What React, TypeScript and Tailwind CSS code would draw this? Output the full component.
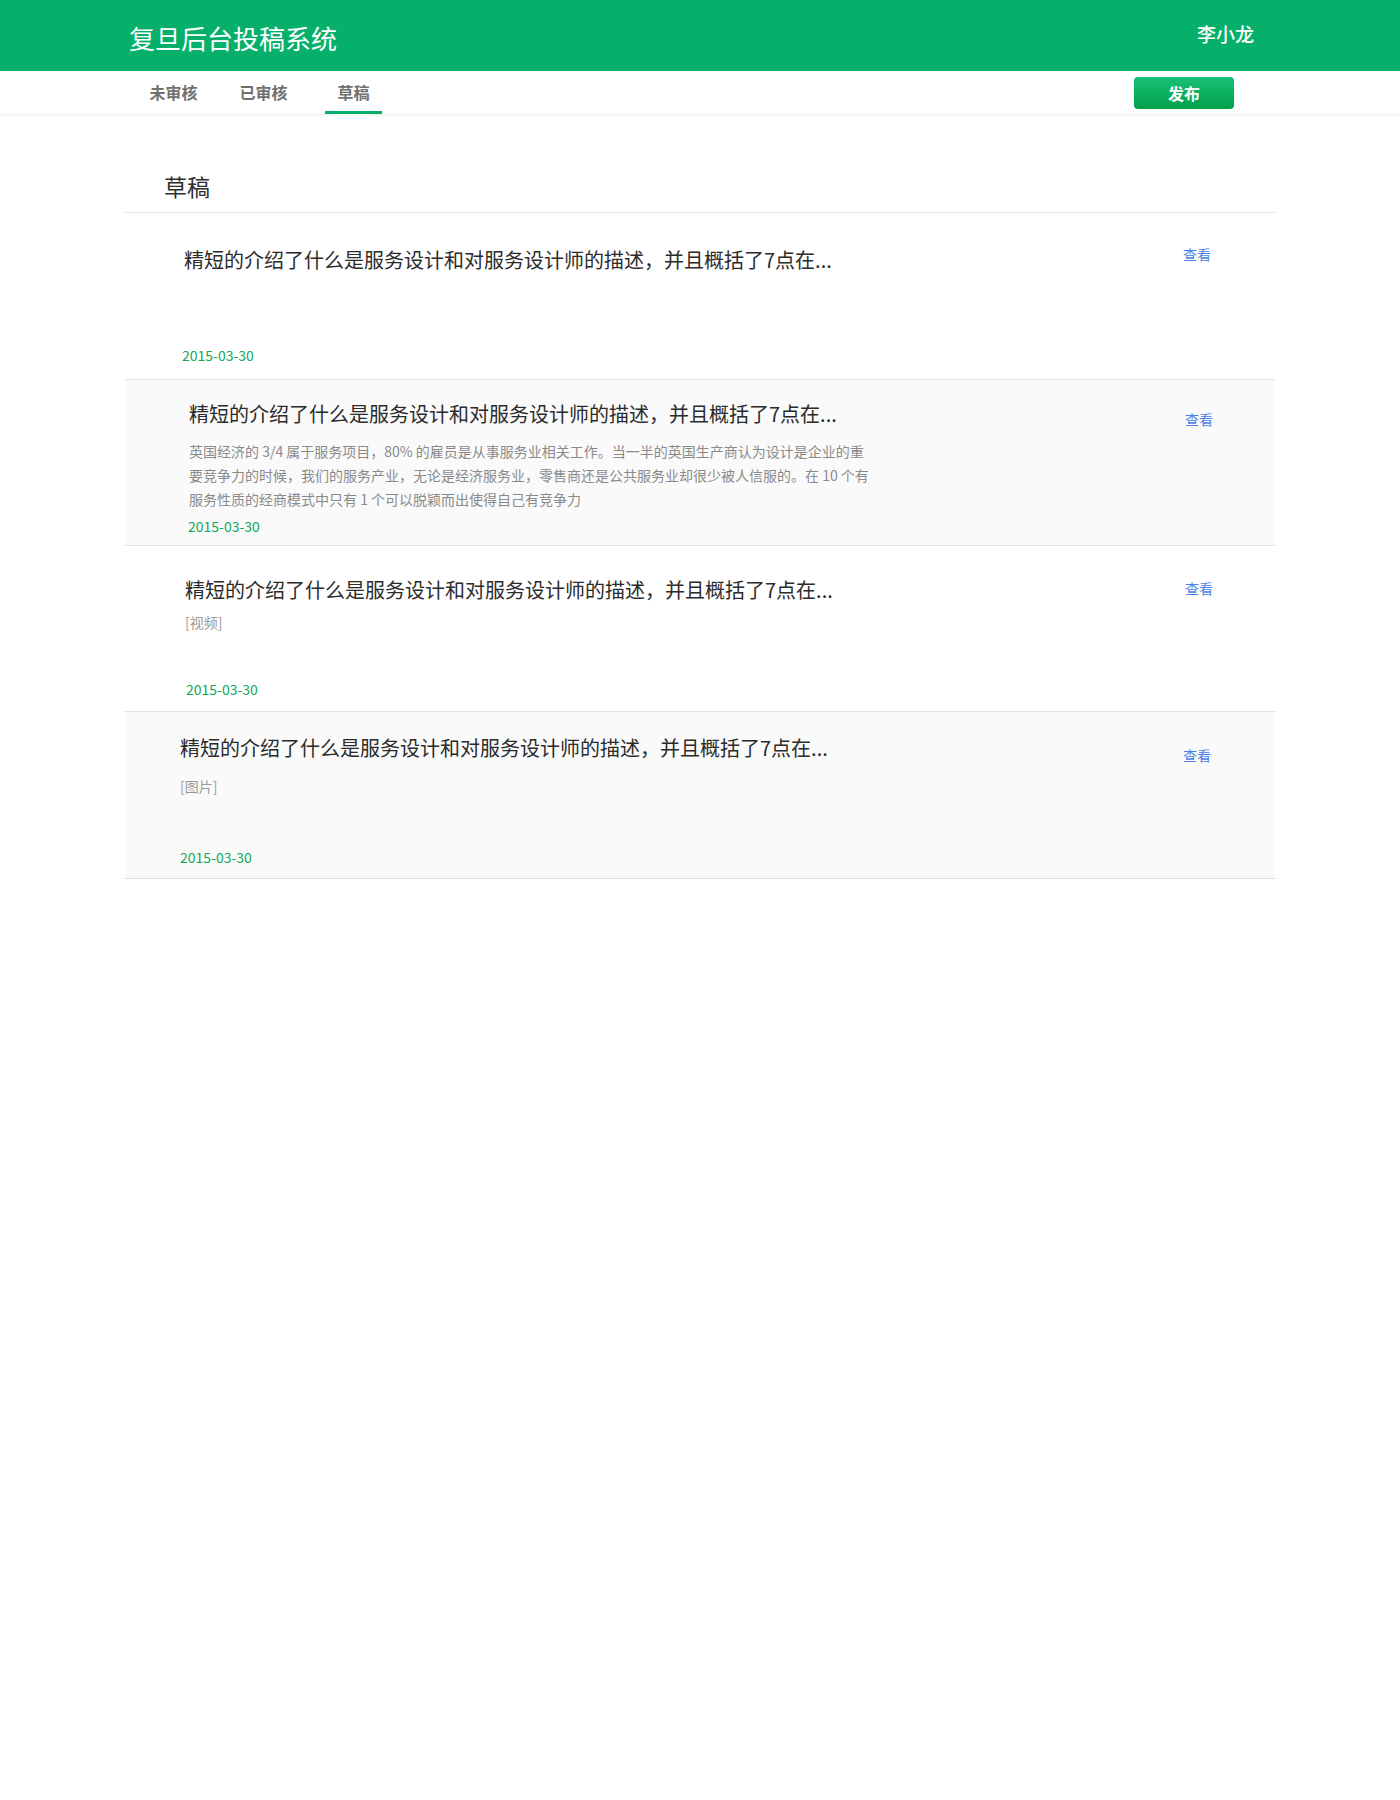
const font = { fontFamily: '"Noto Sans CJK SC", "Noto Sans", sans-serif' }

type Draft = {
    desc?: string[]
    tag?: string
    shaded?: boolean
    rowClass: string
    titleClass: string
    linkClass: string
    dateClass: string
    tagClass?: string
}

const TITLE = '精短的介绍了什么是服务设计和对服务设计师的描述，并且概括了7点在...'

const drafts: Draft[] = [
    {
        rowClass: 'h-[167px]',
        titleClass: 'pt-[33px] pl-[59px]',
        linkClass: 'pt-[28px] pr-[64px]',
        dateClass: 'pl-[57px] pb-[14px]',
    },
    {
        desc: [
            '英国经济的 3/4 属于服务项目，80% 的雇员是从事服务业相关工作。当一半的英国生产商认为设计是企业的重',
            '要竞争力的时候，我们的服务产业，无论是经济服务业，零售商还是公共服务业却很少被人信服的。在 10 个有',
            '服务性质的经商模式中只有 1 个可以脱颖而出使得自己有竞争力',
        ],
        shaded: true,
        rowClass: 'h-[166px]',
        titleClass: 'pt-[20px] pl-[64px]',
        linkClass: 'pt-[26px] pr-[62px]',
        dateClass: 'pl-[63px] pb-[9px]',
    },
    {
        tag: '[视频]',
        rowClass: 'h-[166px]',
        titleClass: 'pt-[30px] pl-[60px]',
        linkClass: 'pt-[29px] pr-[62px]',
        dateClass: 'pl-[61px] pb-[12px]',
        tagClass: 'mt-[8px]',
    },
    {
        tag: '[图片]',
        shaded: true,
        rowClass: 'h-[167px]',
        titleClass: 'pt-[22px] pl-[55px]',
        linkClass: 'pt-[30px] pr-[64px]',
        dateClass: 'pl-[55px] pb-[11px]',
        tagClass: 'mt-[14px]',
    },
]

function DraftRow({ d }: { d: Draft }) {
    return (
        <div className={`${d.rowClass} flex border-b border-[#e0e0e0] ${d.shaded ? 'bg-[#fafafa]' : 'bg-white'}`}>
            <div className="flex-1 flex flex-col">
                <div className={d.titleClass}>
                    <h3 className="text-[20px] leading-[28px] text-[#2b2b2b]">{TITLE}</h3>
                    {d.desc && (
                        <p className="mt-[11px] text-[14px] leading-[24px] text-[#8a8a8a] whitespace-nowrap">
                            {d.desc.map((line) => (
                                <span key={line} className="block">{line}</span>
                            ))}
                        </p>
                    )}
                    {d.tag && (
                        <p className={`${d.tagClass} text-[14px] leading-[20px] text-[#9a9a9a]`}>{d.tag}</p>
                    )}
                </div>
                <div className={`mt-auto ${d.dateClass} text-[14px] leading-[20px] text-[#11a85a]`}>2015-03-30</div>
            </div>
            <div className={d.linkClass}>
                <a className="text-[14px] leading-[20px] text-[#4b7fe6] cursor-pointer">查看</a>
            </div>
        </div>
    )
}

export default function App() {
    return (
        <div className="min-h-screen bg-white" style={font}>
            {/* ── Header ─────────────────────────────────────────── */}
            <header className="h-[71px] bg-[#06b06a]">
                <div className="w-[1150px] mx-auto h-full flex items-center justify-between">
                    <h1 className="pl-[4px] pt-[3px] text-[26px] text-white">复旦后台投稿系统</h1>
                    <span className="pr-[21px] pb-[3px] text-[19px] font-medium text-white">李小龙</span>
                </div>
            </header>

            {/* ── Tabs ───────────────────────────────────────────── */}
            <nav className="h-[44px] border-b border-[#efefef] shadow-[0_1px_2px_rgba(0,0,0,0.04)]">
                <div className="w-[1150px] mx-auto h-full flex items-center justify-between">
                    <div className="h-full flex gap-[33px] pl-[20px]">
                        {['未审核', '已审核', '草稿'].map((t, i) => (
                            <div
                                key={t}
                                className={`w-[57px] h-full flex items-center justify-center text-[16px] font-bold text-[#707070] border-b-[3px] ${i === 2 ? 'border-[#06b06a]' : 'border-transparent'}`}
                            >
                                <span className="pt-[2px]">{t}</span>
                            </div>
                        ))}
                    </div>
                    <button className="mr-[41px] w-[100px] h-[32px] rounded-[4px] bg-gradient-to-b from-[#18c177] to-[#00a04a] text-white text-[16px] font-bold">
                        发布
                    </button>
                </div>
            </nav>

            {/* ── Drafts ─────────────────────────────────────────── */}
            <main className="w-[1150px] mx-auto">
                <h2 className="mt-[55px] pb-[10px] pl-[39px] text-[23px] leading-[32px] text-[#2e2e2e] border-b border-[#e0e0e0]">草稿</h2>
                {drafts.map((d, i) => (
                    <DraftRow key={i} d={d} />
                ))}
            </main>
        </div>
    )
}
